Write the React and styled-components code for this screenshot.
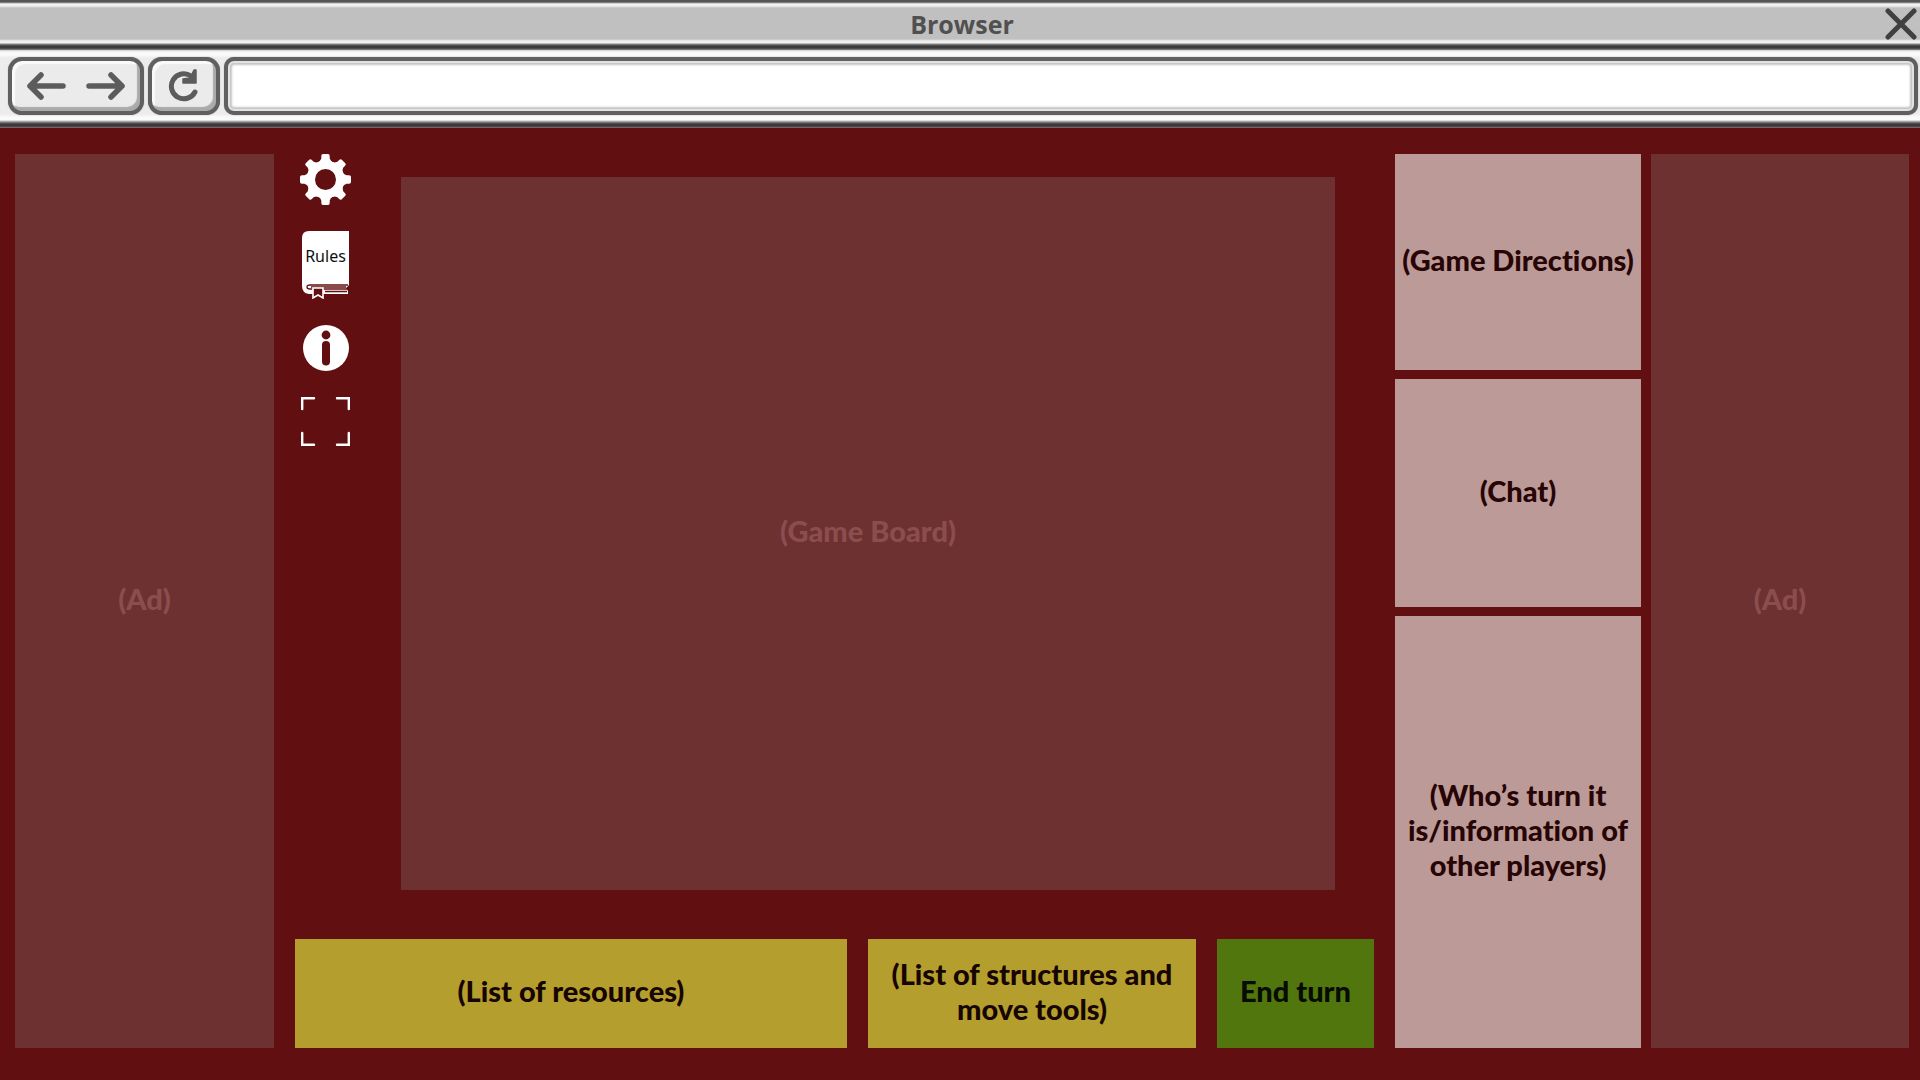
import React from "react";
import styled, { createGlobalStyle } from "styled-components";

const GlobalStyle = createGlobalStyle`
  *, *::before, *::after { box-sizing: border-box; }
  body { margin: 0; background: #610f10; }
  button { font: inherit; color: inherit; border: 0; padding: 0; background: none; cursor: pointer; }
`;

const Page = styled.div`
  display: flex;
  flex-direction: column;
  min-height: 100vh;
  font-family: Lato, "Open Sans", sans-serif;
`;

/* Browser frame */

const TitleBar = styled.header`
  display: grid;
  grid-template-columns: 1fr auto 1fr;
  align-items: center;
  height: 50px;
  padding: 2px 2px 4px 6px;
  background: linear-gradient(
    #555 0, #555 2px, #a8a8a8 3px, #f4f4f4 4px, #eee 6px, #c0c0c0 8px,
    #c0c0c0 39px, #f0f0f0 41px, #f0f0f0 43px, #8a8a8a 44px, #3a3a3a 46px, #3a3a3a 48px, #8a8a8a 50px
  );
`;

const WindowTitle = styled.span`
  grid-column: 2;
  font-family: "Open Sans", sans-serif;
  font-size: 25px;
  line-height: 32px;
  font-weight: 700;
  color: #505050;
`;

const CloseButton = styled.button`
  justify-self: end;
  width: 34px;
  height: 32px;
  svg { display: block; }
`;

const NavBar = styled.nav`
  display: flex;
  gap: 4px;
  height: 78px;
  padding: 7px 2px 13px 8px;
  background: linear-gradient(
    #ccc 0, #fafafa 2px, #fafafa 5px, #ececec 8px, #ececec 64px, #fafafa 67px,
    #fafafa 70px, #8a8a8a 72px, #3a3a3a 74px, #3a3a3a 76px, #887070 78px
  );
`;

const buttonFace = `
  border: 4px solid #606060;
  border-radius: 14px;
  background: #ebebeb;
  box-shadow: inset -3px -4px 1px #aaa, inset 3px 3px 1px #fafafa, 0 0 1px #777;
`;

const HistoryGroup = styled.div`
  ${buttonFace}
  display: flex;
  justify-content: space-between;
  width: 136px;
  padding: 0 14px;
`;

const HistoryButton = styled.button`
  display: flex;
  align-items: center;
`;

const ReloadButton = styled.button`
  && {
    ${buttonFace}
  }
  display: flex;
  align-items: center;
  justify-content: center;
  width: 72px;
`;

const Address = styled.input`
  flex: 1;
  min-width: 0;
  padding: 0 16px;
  border: 4px solid #606060;
  border-radius: 10px;
  outline: 0;
  background: #fff;
  box-shadow: inset 0 0 0 2px #e2e2e2, inset 0 0 2px 4px #c6c6c6, 0 0 1px #777;
  font-family: "Open Sans", sans-serif;
  font-size: 25px;
  color: #505050;
`;

/* Game screen */

const Screen = styled.main`
  flex: 1;
  display: grid;
  grid-template-columns: 259fr 1101fr 246fr 258fr;
  column-gap: 10px;
  padding: 26px 11px 32px 15px;
  background: #610f10;
`;

const Label = styled.p`
  display: block;
  margin: 0;
  padding-bottom: 6px;
  font-size: 29px;
  line-height: 35px;
  font-weight: 900;
  font-variant-ligatures: none;
  text-align: center;
`;

const Panel = styled.section`
  display: flex;
  align-items: center;
  justify-content: center;
  min-width: 0;
  background: #6d3131;
  color: #8b4e4e;
`;

const AdPanel = styled(Panel).attrs({ as: "aside" })``;

const Play = styled.div`
  display: flex;
  flex-direction: column;
  gap: 49px;
  min-width: 0;
  margin: 0 11px;
`;

const Upper = styled.div`
  flex: 1;
  display: flex;
  gap: 50px;
  padding-right: 39px;
`;

const Tools = styled.div`
  display: flex;
  flex-direction: column;
  align-items: center;
  gap: 26px;
  width: 51px;
  margin-left: 5px;
`;

const ToolButton = styled.button`
  position: relative;
  display: block;
  svg { display: block; }
`;

const BookLabel = styled.span`
  position: absolute;
  inset: 14px 0 auto 0;
  font-family: "Noto Sans", "Open Sans", sans-serif;
  font-size: 16px;
  line-height: 22px;
  text-align: center;
  color: #111;
`;

const Board = styled(Panel)`
  flex: 1;
  margin-top: 23px;
`;

const Actions = styled.div`
  display: grid;
  grid-template-columns: 552fr 328fr 157fr;
  gap: 21px;
  height: 109px;
`;

const Tray = styled(Panel)`
  background: #b49e2e;
  color: #170500;
  padding: 0 12px;
`;

const EndTurn = styled.button`
  && {
    background: #51760d;
    color: #070b00;
  }
`;

const Side = styled.div`
  display: grid;
  grid-template-rows: 216fr 228fr 432fr;
  gap: 9px;
  min-width: 0;
`;

const Info = styled(Panel)`
  background: #bc9a98;
  color: #270505;
`;

const Arrow = ({ flip }) => (
  <svg width="40" height="30" viewBox="0 0 40 30" fill="none" stroke="#5c5c5c" strokeWidth="5.5" strokeLinecap="round" strokeLinejoin="round">
    <path d={flip ? "M3 15H36M25 4L36 15L25 26" : "M37 15H4M15 4L4 15L15 26"} />
  </svg>
);

const Reload = () => (
  <svg width="32" height="34" viewBox="0 0 32 34">
    <path d="M27 23A12.5 12.5 0 1 1 23 7" fill="none" stroke="#5c5c5c" strokeWidth="5" strokeLinecap="round" />
    <path d="M28 1V14H15V10L22 9L26 1Z" fill="#5c5c5c" stroke="#5c5c5c" strokeWidth="1.5" strokeLinejoin="round" />
  </svg>
);

const Gear = () => (
  <svg width="51" height="51" viewBox="-25.5 -25.5 51 51">
    <g fill="#fff">
      {[0, 45, 90, 135, 180, 225, 270, 315].map((a) => (
        <path
          key={a}
          transform={`rotate(${a})`}
          d="M-9 -16Q-5 -18 -4.2 -21V-23.5Q-4.2 -25.5 -2.5 -25.5H2.5Q4.2 -25.5 4.2 -23.5V-21Q5 -18 9 -16Z"
        />
      ))}
      <path fillRule="evenodd" d="M-19 0A19 19 0 1 0 19 0A19 19 0 1 0 -19 0ZM-10.5 0A10.5 10.5 0 1 1 10.5 0A10.5 10.5 0 1 1 -10.5 0Z" />
    </g>
  </svg>
);

const Book = () => (
  <svg width="47" height="68" viewBox="0 0 47 68">
    <path d="M7 0H47V54L44 57L46 60V63H7Q0 62 0 55V7Q0 0 7 0Z" fill="#fff" />
    <g fill="none" stroke="#610f10" strokeWidth="1.3">
      <path d="M46 54H8Q5 54 5 56Q5 58 8 58H46" />
      <path d="M9 56H44M23 60.5H45" />
    </g>
    <path d="M11 57H21V67L16 64L11 67Z" fill="#610f10" stroke="#fff" strokeWidth="1.6" />
  </svg>
);

const InfoIcon = () => (
  <svg width="46" height="46" viewBox="0 0 46 46">
    <circle cx="23" cy="23" r="23" fill="#fff" />
    <circle cx="23" cy="10" r="4.4" fill="#610f10" />
    <rect x="19" y="16" width="8" height="24.5" rx="4" fill="#610f10" />
  </svg>
);

const Expand = () => (
  <svg width="49" height="49" viewBox="0 0 49 49" fill="none" stroke="#fff" strokeWidth="2.4" strokeLinecap="round">
    <path d="M1.2 12V1.2H13M36 1.2H47.8V12M47.8 36V47.8H36M13 47.8H1.2V36" />
  </svg>
);

export default function App() {
  return (
    <Page>
      <GlobalStyle />
      <TitleBar>
        <WindowTitle>Browser</WindowTitle>
        <CloseButton aria-label="Close">
          <svg width="34" height="32" viewBox="0 0 34 32" stroke="#404040" strokeWidth="5" strokeLinecap="round">
            <path d="M4 3L30 29M30 3L4 29" />
          </svg>
        </CloseButton>
      </TitleBar>
      <NavBar>
        <HistoryGroup>
          <HistoryButton aria-label="Back"><Arrow /></HistoryButton>
          <HistoryButton aria-label="Forward"><Arrow flip /></HistoryButton>
        </HistoryGroup>
        <ReloadButton aria-label="Reload"><Reload /></ReloadButton>
        <Address type="text" aria-label="Address" />
      </NavBar>
      <Screen>
        <AdPanel><Label>(Ad)</Label></AdPanel>
        <Play>
          <Upper>
            <Tools>
              <ToolButton aria-label="Settings"><Gear /></ToolButton>
              <ToolButton><Book /><BookLabel>Rules</BookLabel></ToolButton>
              <ToolButton aria-label="Information"><InfoIcon /></ToolButton>
              <ToolButton aria-label="Full screen"><Expand /></ToolButton>
            </Tools>
            <Board><Label>(Game Board)</Label></Board>
          </Upper>
          <Actions>
            <Tray><Label>(List of resources)</Label></Tray>
            <Tray><Label>(List of structures and move tools)</Label></Tray>
            <EndTurn><Label as="span">End turn</Label></EndTurn>
          </Actions>
        </Play>
        <Side>
          <Info><Label>(Game Directions)</Label></Info>
          <Info><Label>(Chat)</Label></Info>
          <Info><Label>(Who’s turn it is/information of other players)</Label></Info>
        </Side>
        <AdPanel><Label>(Ad)</Label></AdPanel>
      </Screen>
    </Page>
  );
}
